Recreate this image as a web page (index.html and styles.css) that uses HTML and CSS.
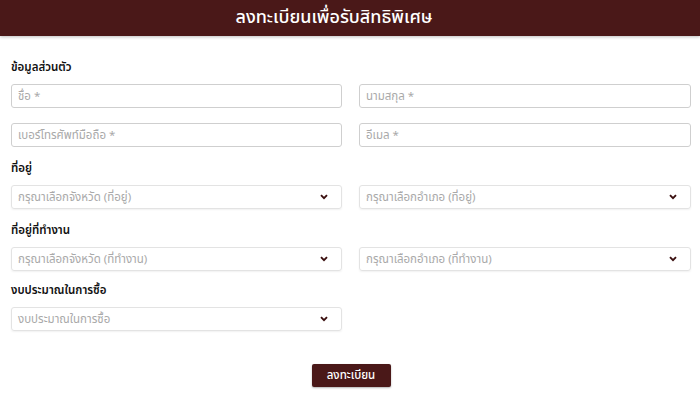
FILE: index.html
```html
<!DOCTYPE html>
<html lang="th">
<head>
<meta charset="utf-8">
<title>ลงทะเบียนเพื่อรับสิทธิพิเศษ</title>
<link rel="stylesheet" href="styles.css">
</head>
<body>
<header class="topbar">
  <h1 class="title">ลงทะเบียนเพื่อรับสิทธิพิเศษ</h1>
</header>
<form class="form">
  <div class="section">
    <div class="label">ข้อมูลส่วนตัว</div>
    <div class="grid">
      <div class="field input"><span class="ph">ชื่อ *</span></div>
      <div class="field input"><span class="ph">นามสกุล *</span></div>
      <div class="field input"><span class="ph">เบอร์โทรศัพท์มือถือ *</span></div>
      <div class="field input"><span class="ph">อีเมล *</span></div>
    </div>
  </div>
  <div class="section">
    <div class="label">ที่อยู่</div>
    <div class="grid">
      <div class="field select"><span class="ph">กรุณาเลือกจังหวัด (ที่อยู่)</span><svg class="chev" viewBox="0 0 8 6"><path d="M1 1.2 L4 4.2 L7 1.2" fill="none" stroke="#3a0f0f" stroke-width="1.9"/></svg></div>
      <div class="field select"><span class="ph">กรุณาเลือกอำเภอ (ที่อยู่)</span><svg class="chev" viewBox="0 0 8 6"><path d="M1 1.2 L4 4.2 L7 1.2" fill="none" stroke="#3a0f0f" stroke-width="1.9"/></svg></div>
    </div>
  </div>
  <div class="section section-tight">
    <div class="label">ที่อยู่ที่ทำงาน</div>
    <div class="grid">
      <div class="field select"><span class="ph">กรุณาเลือกจังหวัด (ที่ทำงาน)</span><svg class="chev" viewBox="0 0 8 6"><path d="M1 1.2 L4 4.2 L7 1.2" fill="none" stroke="#3a0f0f" stroke-width="1.9"/></svg></div>
      <div class="field select"><span class="ph">กรุณาเลือกอำเภอ (ที่ทำงาน)</span><svg class="chev" viewBox="0 0 8 6"><path d="M1 1.2 L4 4.2 L7 1.2" fill="none" stroke="#3a0f0f" stroke-width="1.9"/></svg></div>
    </div>
  </div>
  <div class="section">
    <div class="label">งบประมาณในการซื้อ</div>
    <div class="grid">
      <div class="field select"><span class="ph">งบประมาณในการซื้อ</span><svg class="chev" viewBox="0 0 8 6"><path d="M1 1.2 L4 4.2 L7 1.2" fill="none" stroke="#3a0f0f" stroke-width="1.9"/></svg></div>
    </div>
  </div>
  <div class="actions">
    <button type="button" class="btn">ลงทะเบียน</button>
  </div>
</form>
</body>
</html>
```
FILE: styles.css
```css
* { box-sizing: border-box; }
html, body { margin: 0; padding: 0; background: #fff; }
body {
  font-family: "Noto Sans Thai", "Noto Sans", "Liberation Sans", sans-serif;
  color: #111;
  width: 700px;
  height: 401px;
  overflow: hidden;
}
.topbar {
  height: 36px;
  background: #4a1818;
  box-shadow: 0 1px 3px rgba(0,0,0,0.25);
  display: flex;
  align-items: center;
  justify-content: center;
}
.title {
  margin: 0;
  color: #fff;
  font-size: 18px;
  font-weight: 500;
  line-height: 1;
  padding-right: 32px;
}
.form {
  padding: 24px 9px 0 11px;
}
.label {
  font-size: 11.5px;
  font-weight: 600;
  line-height: 16px;
  height: 16px;
  margin-bottom: 8px;
}
.grid {
  display: grid;
  grid-template-columns: 331px 332px;
  column-gap: 17px;
  row-gap: 15px;
  margin-bottom: 14px;
}
.section-tight .grid { margin-bottom: 12px; }
.field {
  height: 24px;
  border: 1px solid #cfcfcf;
  border-radius: 3px;
  display: flex;
  align-items: center;
  padding: 0 6px;
  font-size: 11.5px;
}
.select {
  border-color: #e3e3e3;
  box-shadow: 0 1px 2px rgba(0,0,0,0.06);
  justify-content: space-between;
  padding-right: 13px;
}
.ph { color: #a9a9a9; white-space: nowrap; }
.chev { width: 8px; height: 6px; display: block; }
.actions {
  display: flex;
  justify-content: center;
  padding-top: 19px;
}
.btn {
  width: 79px;
  height: 23px;
  background: #4a1818;
  color: #fff;
  border: none;
  border-radius: 2px;
  font-family: inherit;
  font-size: 11.5px;
  font-weight: 500;
  box-shadow: 0 1px 2px rgba(0,0,0,0.3);
  padding: 0;
}
```
